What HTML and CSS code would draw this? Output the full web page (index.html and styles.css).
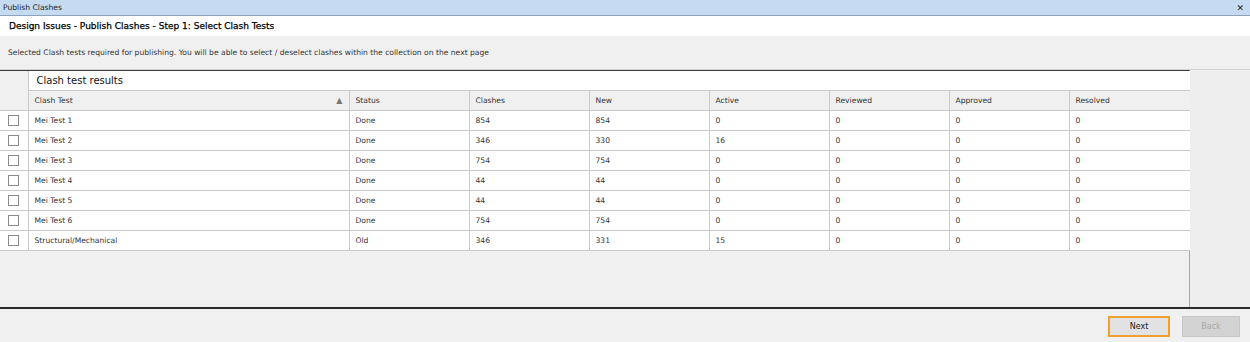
FILE: index.html
```html
<!DOCTYPE html>
<html>
<head>
    <title>Publish Clashes</title>
    <link rel="stylesheet" href="styles.css">
</head>
<body>
    <div class="window">
        <div class="titlebar">
            <span>Publish Clashes</span>
            <span class="close">&#x2715;</span>
        </div>
        <div class="step-header">Design Issues - Publish Clashes - Step 1: Select Clash Tests</div>
        <div class="intro">Selected Clash tests required for publishing. You will be able to select / deselect clashes within the collection on the next page</div>

        <div class="grid-area">
            <div class="grid">
                <table class="results">
                    <colgroup>
                        <col style="width: 28px">
                        <col style="width: 321px">
                        <col style="width: 120px">
                        <col style="width: 120px">
                        <col style="width: 120px">
                        <col style="width: 120px">
                        <col style="width: 120px">
                        <col style="width: 120px">
                        <col style="width: 121px">
                    </colgroup>
                    <thead>
                        <tr class="group-row">
                            <th class="corner" rowspan="2"></th>
                            <th class="group-title" colspan="8">Clash test results</th>
                        </tr>
                        <tr class="head-row">
                            <th><div class="sortable">Clash Test <span class="sort">&#9650;</span></div></th>
                            <th>Status</th>
                            <th>Clashes</th>
                            <th>New</th>
                            <th>Active</th>
                            <th>Reviewed</th>
                            <th>Approved</th>
                            <th>Resolved</th>
                        </tr>
                    </thead>
                    <tbody id="rows"></tbody>
                </table>
            </div>
            <div class="side"></div>
        </div>

        <div class="footer">
            <button class="btn primary">Next</button>
            <button class="btn" disabled>Back</button>
        </div>
    </div>

    <script>
        const tests = [
            ['Mei Test 1', 'Done', 854, 854, 0, 0, 0, 0],
            ['Mei Test 2', 'Done', 346, 330, 16, 0, 0, 0],
            ['Mei Test 3', 'Done', 754, 754, 0, 0, 0, 0],
            ['Mei Test 4', 'Done', 44, 44, 0, 0, 0, 0],
            ['Mei Test 5', 'Done', 44, 44, 0, 0, 0, 0],
            ['Mei Test 6', 'Done', 754, 754, 0, 0, 0, 0],
            ['Structural/Mechanical', 'Old', 346, 331, 15, 0, 0, 0]
        ];

        const rows = document.getElementById('rows');
        tests.forEach(test => {
            const tr = document.createElement('tr');
            tr.innerHTML = '<td class="check"><span class="box"></span></td>' +
                test.map(value => `<td>${value}</td>`).join('');
            rows.appendChild(tr);
        });
    </script>
</body>
</html>
```

FILE: styles.css
```css
* {
    box-sizing: border-box;
}
body {
    margin: 0;
    font-family: Tahoma, "DejaVu Sans", sans-serif;
    font-size: 7.6px;
    color: #1a1a1a;
    background-color: #f0f0f0;
}
.window {
    width: 1250px;
    height: 342px;
    display: flex;
    flex-direction: column;
    overflow: hidden;
}
.titlebar {
    height: 16px;
    padding: 0 6px 0 3px;
    display: flex;
    align-items: center;
    justify-content: space-between;
    background-color: #c4dbf1;
    border-bottom: 1px solid #8ea3b9;
    font-size: 7.6px;
    color: #222;
}
.titlebar .close {
    font-size: 9px;
    color: #222;
}
.step-header {
    height: 20px;
    padding-left: 9px;
    display: flex;
    align-items: center;
    background-color: #fff;
    font-size: 9px;
    color: #000;
    -webkit-text-stroke: 0.25px #000;
}
.intro {
    height: 34px;
    padding-left: 8px;
    display: flex;
    align-items: center;
    border-bottom: 1px solid #d4d4d4;
    color: #333;
}
.grid-area {
    flex: 1;
    display: flex;
}
.grid {
    width: 1190px;
    border-top: 1px solid #3a3a3a;
    border-right: 1px solid #a8a8a8;
}
.side {
    flex: 1;
    background-color: #eeeeee;
}
.results {
    width: 1190px;
    table-layout: fixed;
    border-collapse: collapse;
}
.results th,
.results td {
    height: 20px;
    padding: 0 6px;
    border: 1px solid #c9c9c9;
    text-align: left;
    font-weight: normal;
    white-space: nowrap;
    color: #333;
}
.results td {
    background-color: #fff;
}
.results .corner {
    background-color: #f0f0f0;
    border-top: none;
    border-left: none;
}
.results .group-title {
    height: 19px;
    background-color: #fff;
    padding-left: 8px;
    font-size: 10px;
    color: #111;
    border-top: none;
    border-bottom: none;
}
.head-row th {
    background-color: #f0f0f0;
}
.sortable {
    display: flex;
    justify-content: space-between;
}
.sort {
    font-size: 8px;
    color: #777;
}
.results .check {
    text-align: center;
    padding: 0;
    border-left: none;
}
.box {
    display: inline-block;
    width: 11px;
    height: 11px;
    border: 1px solid #8a8a8a;
    background-color: #fff;
    vertical-align: middle;
}
.footer {
    height: 35px;
    display: flex;
    justify-content: flex-end;
    align-items: center;
    gap: 12px;
    padding: 2px 10px 0 0;
    border-top: 2px solid #2a2a2a;
}
.btn {
    width: 62px;
    height: 21px;
    font-family: Tahoma, "DejaVu Sans", sans-serif;
    font-size: 8px;
    color: #222;
    background-color: #e2e2e2;
    border: 2px solid #f0a030;
}
.btn:disabled {
    width: 58px;
    color: #a8a8a8;
    background-color: #d3d3d3;
    border: 1px solid #c6c6c6;
}
```
